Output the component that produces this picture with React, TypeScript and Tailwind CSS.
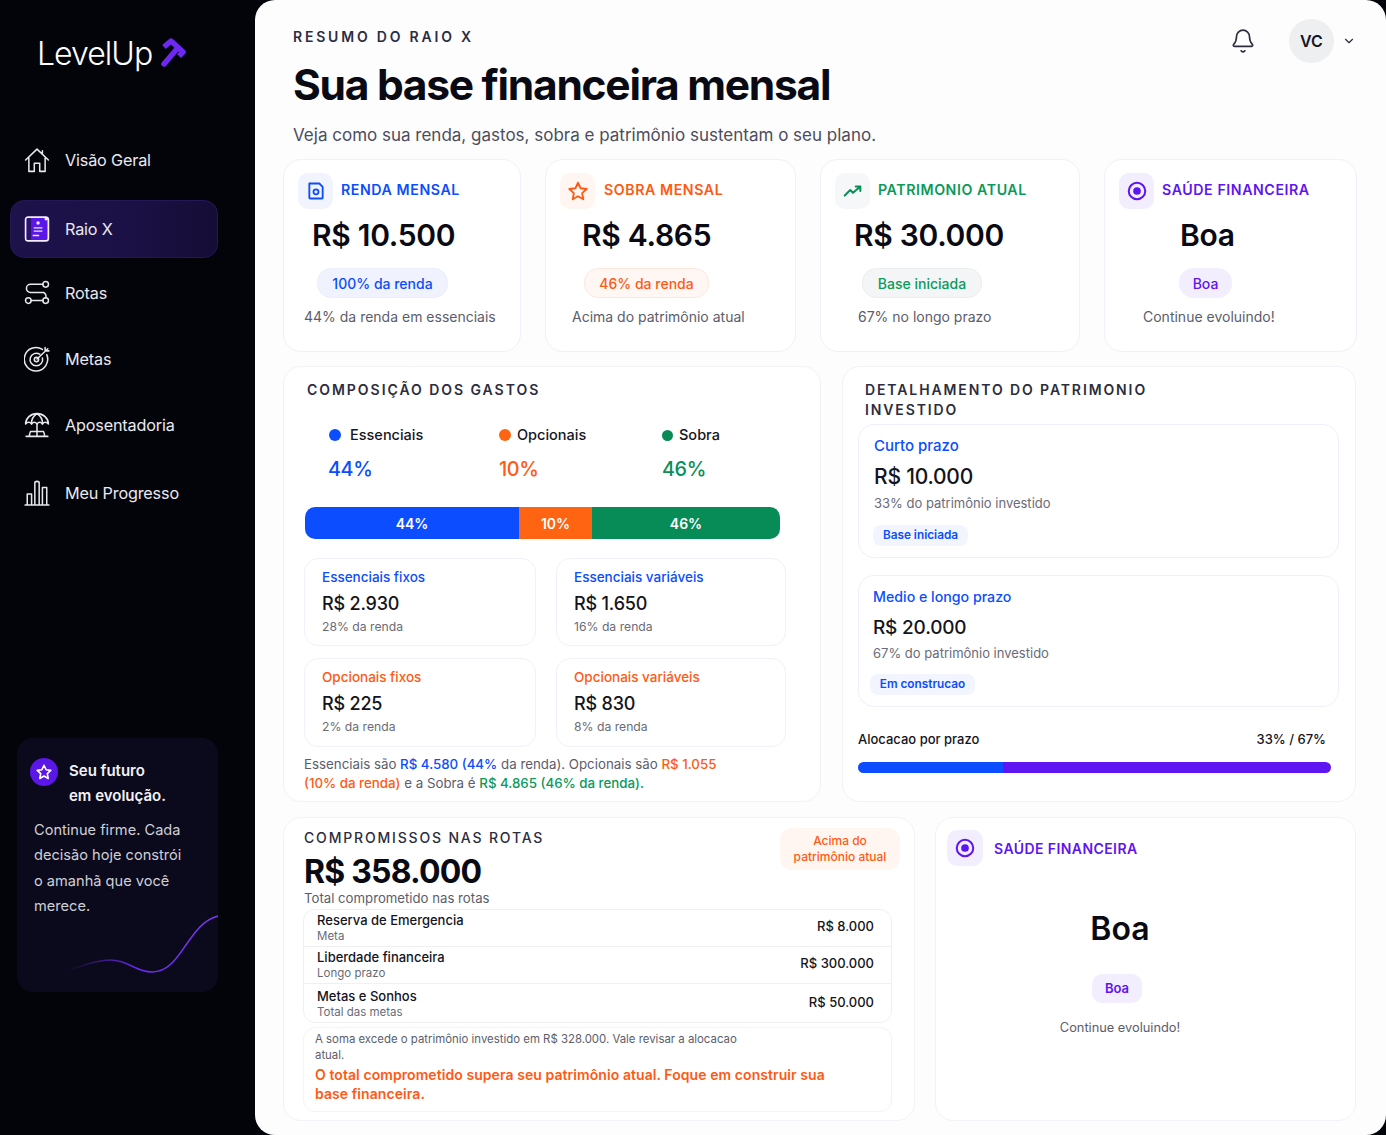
import { Bell, ChevronDown } from "lucide-react";
import type { ReactNode } from "react";

function Logo() {
  return (
    <div className="ml-[37px] flex h-[40px] items-center">
      <span className="text-[32px] font-light tracking-[-0.03em] text-white">LevelUp</span>
      <svg viewBox="0 0 27 30" className="mt-[-2px] ml-[8px] h-[30px] w-[27px]">
        <path d="M4 26 L16 12" stroke="#6d28f2" strokeWidth="5.5" strokeLinecap="round" fill="none" />
        <path d="M4 9 L11 3 L23 14 L19 18" stroke="#6d28f2" strokeWidth="5.5" strokeLinejoin="round" fill="none" />
      </svg>
    </div>
  );
}

function NavIcon({ name }: { name: string }) {
  const common = { fill: "none", stroke: "#e8e8ee", strokeWidth: 1.4, strokeLinecap: "round" as const, strokeLinejoin: "round" as const };
  if (name === "home")
    return (
      <svg viewBox="0 0 24 24" className="h-[26px] w-[26px]" {...common}>
        <path d="M1.5 12 L12 2 L22.5 12 M4.5 10 V22.5 H9.5 V15 H14.5 V22.5 H19.5 V10 M17 3.5 L17 6" />
      </svg>
    );
  if (name === "raio")
    return (
      <svg viewBox="0 0 24 24" className="h-[26px] w-[26px]">
        <rect x="1.5" y="1" width="21" height="22" rx="2.5" fill="#5b16e8" stroke="#f2f0ff" strokeWidth="1.6" />
        <rect x="2.5" y="2" width="4" height="20" fill="#2a1466" />
        <circle cx="13" cy="6.5" r="1.6" fill="#e9e3ff" />
        <path d="M9 11 H17 M9 14 H17 M8 18 H14" stroke="#e9e3ff" strokeWidth="1.2" />
        <circle cx="20.5" cy="2.5" r="1.6" fill="#f2f0ff" />
      </svg>
    );
  if (name === "rotas")
    return (
      <svg viewBox="0 0 24 24" className="h-[26px] w-[26px]" {...common}>
        <circle cx="20" cy="4" r="2.6" />
        <circle cx="4" cy="19" r="2.6" />
        <circle cx="20" cy="19" r="2.6" />
        <path d="M17.4 4 H6 a3.6 3.6 0 0 0 0 7.5 H18 a3.7 3.7 0 0 1 2 5 M6.6 19 H17.4" />
      </svg>
    );
  if (name === "metas")
    return (
      <svg viewBox="0 0 24 24" className="h-[26px] w-[26px]" {...common}>
        <path d="M17 3.2 A10.8 10.8 0 1 0 21 8" />
        <path d="M14.5 7.6 A5.8 5.8 0 1 0 17 11" />
        <circle cx="11.5" cy="12.5" r="2" />
        <path d="M12 12 L22 2.5 M19.5 1.5 V4.5 H23" />
      </svg>
    );
  if (name === "apos")
    return (
      <svg viewBox="0 0 24 24" className="h-[26px] w-[26px]" {...common}>
        <path d="M1.5 11 A10.5 9.5 0 0 1 22.5 11 Q19.5 8 17 11 Q14.5 8 12 11 Q9.5 8 7 11 Q4.5 8 1.5 11 Z" />
        <path d="M12 1.5 Q6.5 5 7 11 M12 1.5 Q17.5 5 17 11 M12 11 V22.5 M2 22.5 H22 M6 18 H18 M6 18 Q5 20 5 22.5 M18 18 Q19 20 19 22.5" />
      </svg>
    );
  return (
    <svg viewBox="0 0 24 24" className="h-[26px] w-[26px]" {...common}>
      <path d="M1 23 H23 M3 23 V13 H7 V23 M10 23 V2 Q12 0.5 14 2 V23 M17 23 V7 H21 V23" />
    </svg>
  );
}

const navItems = [
  { icon: "home", label: "Visão Geral", cls: "mt-[57px]" },
  { icon: "raio", label: "Raio X", cls: "mt-[11px]", active: true },
  { icon: "rotas", label: "Rotas", cls: "mt-[6px]" },
  { icon: "metas", label: "Metas", cls: "mt-[8px]" },
  { icon: "apos", label: "Aposentadoria", cls: "mt-[8px]" },
  { icon: "prog", label: "Meu Progresso", cls: "mt-[10px]" },
];

function Sidebar() {
  return (
    <aside className="flex w-[255px] shrink-0 flex-col pt-[34px]">
      <Logo />
      <nav className="flex flex-col">
        {navItems.map((item) => (
          <div
            key={item.label}
            className={`ml-[10px] flex h-[58px] w-[208px] items-center gap-[15px] rounded-[14px] text-[16.2px] tracking-[-0.01em] text-[#e9e9ef] ${item.cls} ${
              item.active ? "border border-[#241758] bg-gradient-to-r from-[#1d1249] via-[#1c1147] to-[#150d36] pl-[13px]" : "pl-[14px]"
            }`}
          >
            <NavIcon name={item.icon} />
            {item.label}
          </div>
        ))}
      </nav>
      <div className="relative mt-[216px] ml-[17px] h-[254px] w-[201px] overflow-hidden rounded-[16px] bg-[#0b0a1c] pt-[20px] pl-[13px]">
        <div className="flex gap-[11px]">
          <div className="flex h-[28px] w-[28px] items-center justify-center rounded-full bg-[#5b16e8]">
            <svg viewBox="0 0 24 24" className="h-[18px] w-[18px]" fill="none" stroke="#fff" strokeWidth="2.2" strokeLinejoin="round">
              <path d="M12 3 L14.8 9 L21 9.8 L16.4 14.2 L17.6 20.6 L12 17.4 L6.4 20.6 L7.6 14.2 L3 9.8 L9.2 9 Z" />
            </svg>
          </div>
          <div className="text-[15px] font-semibold leading-[25px] text-[#f2f2f6]">
            Seu futuro
            <br />
            em evolução.
          </div>
        </div>
        <p className="mt-[10px] ml-[4px] w-[160px] text-[14.6px] leading-[25.3px] text-[#cfcfd6]">
          Continue firme. Cada decisão hoje constrói o amanhã que você merece.
        </p>
        <svg viewBox="0 0 201 90" className="absolute right-0 bottom-0 h-[90px] w-[201px]" fill="none">
          <defs>
            <linearGradient id="wave" x1="0" x2="1" y1="0" y2="0">
              <stop offset="0.15" stopColor="#6d28f2" stopOpacity="0" />
              <stop offset="0.55" stopColor="#6d28f2" />
              <stop offset="1" stopColor="#7c3af5" />
            </linearGradient>
          </defs>
          <path d="M25 73 C50 73 70 58 93 58 C112 58 118 70 135 70 C165 70 170 22 201 14" stroke="url(#wave)" strokeWidth="1.5" />
        </svg>
      </div>
    </aside>
  );
}

type Stat = {
  label: string;
  labelCls: string;
  iconBg: string;
  icon: ReactNode;
  value: string;
  valueCls: string;
  pill: string;
  pillCls: string;
  note: string;
  noteCls: string;
  gap: string;
};

const stats: Stat[] = [
  {
    label: "RENDA MENSAL",
    labelCls: "text-[#0b4dff]",
    iconBg: "bg-[#f1f3fd]",
    icon: (
      <svg viewBox="0 0 24 24" className="h-[20px] w-[20px]" fill="none" stroke="#0b4dff" strokeWidth="2.2" strokeLinejoin="round">
        <path d="M4 3 H16 L20 7 V20 a1 1 0 0 1 -1 1 H5 a1 1 0 0 1 -1 -1 Z" />
        <circle cx="12" cy="13" r="3" />
      </svg>
    ),
    value: "R$ 10.500",
    valueCls: "ml-[14px]",
    pill: "100% da renda",
    pillCls: "ml-[19px] w-[131px] bg-[#f0f2fd] text-[#0b4dff] border-[#eceffb]",
    note: "44% da renda em essenciais",
    noteCls: "ml-[6px]",
    gap: "gap-[8px]",
  },
  {
    label: "SOBRA MENSAL",
    labelCls: "text-[#ff5a14]",
    iconBg: "bg-[#fff6f2]",
    icon: (
      <svg viewBox="0 0 24 24" className="h-[22px] w-[22px]" fill="none" stroke="#ff5a14" strokeWidth="2" strokeLinejoin="round">
        <path d="M12 3 L14.8 9 L21.5 9.8 L16.5 14.3 L17.8 21 L12 17.7 L6.2 21 L7.5 14.3 L2.5 9.8 L9.2 9 Z" />
      </svg>
    ),
    value: "R$ 4.865",
    valueCls: "ml-[22px]",
    pill: "46% da renda",
    pillCls: "ml-[24px] w-[125px] bg-[#fff7f3] text-[#ff5a14] border-[#fde8de]",
    note: "Acima do patrimônio atual",
    noteCls: "ml-[12px]",
    gap: "gap-[9px]",
  },
  {
    label: "PATRIMONIO ATUAL",
    labelCls: "text-[#0a9a5c]",
    iconBg: "bg-[#f6f7f8]",
    icon: (
      <svg viewBox="0 0 24 24" className="h-[22px] w-[22px]" fill="none" stroke="#0a8f57" strokeWidth="2.2" strokeLinecap="round" strokeLinejoin="round">
        <path d="M3 17 L9 11 L12 14 L20 7 M15 7 H20 V12" />
      </svg>
    ),
    value: "R$ 30.000",
    valueCls: "ml-[19px]",
    pill: "Base iniciada",
    pillCls: "ml-[27px] w-[120px] bg-[#f3f5f6] text-[#0a9a5c] border-[#eceeef]",
    note: "67% no longo prazo",
    noteCls: "ml-[23px]",
    gap: "gap-[8px]",
  },
  {
    label: "SAÚDE FINANCEIRA",
    labelCls: "text-[#5f14f2]",
    iconBg: "bg-[#f2eefe]",
    icon: (
      <svg viewBox="0 0 24 24" className="h-[22px] w-[22px]" fill="none">
        <circle cx="12" cy="12" r="9" stroke="#5f14f2" strokeWidth="2.2" />
        <circle cx="12" cy="12" r="4.2" fill="#5f14f2" />
      </svg>
    ),
    value: "Boa",
    valueCls: "ml-[61px]",
    pill: "Boa",
    pillCls: "ml-[60px] w-[53px] bg-[#f2eefe] text-[#5f14f2] border-[#f2eefe]",
    note: "Continue evoluindo!",
    noteCls: "ml-[24px]",
    gap: "gap-[8px]",
  },
];

function StatCard({ s }: { s: Stat }) {
  return (
    <div className="h-[193px] rounded-[18px] border border-[#f0f1fb] bg-white pt-[13px] pl-[14px]">
      <div className={`flex items-center ${s.gap}`}>
        <div className={`flex h-[36px] w-[35px] items-center justify-center rounded-[10px] ${s.iconBg}`}>{s.icon}</div>
        <span className={`pb-[2px] text-[14.2px] font-semibold tracking-[0.04em] ${s.labelCls}`}>{s.label}</span>
      </div>
      <div className={`mt-[7px] text-[30px] leading-[38px] font-semibold tracking-[-0.01em] whitespace-pre text-[#0a0a14] ${s.valueCls}`}>{s.value}</div>
      <div className={`mt-[14px] flex h-[30px] items-center justify-center rounded-[14px] border text-[14px] font-medium ${s.pillCls}`}>{s.pill}</div>
      <div className={`mt-[9px] text-[14px] leading-[20px] text-[#5c5d6c] ${s.noteCls}`}>{s.note}</div>
    </div>
  );
}

const subCards = [
  { title: "Essenciais fixos", value: "R$ 2.930", sub: "28% da renda", color: "text-[#0b4dff]", cls: "h-[88px]" },
  { title: "Essenciais variáveis", value: "R$ 1.650", sub: "16% da renda", color: "text-[#0b4dff]", cls: "h-[88px]" },
  { title: "Opcionais fixos", value: "R$ 225", sub: "2% da renda", color: "text-[#ff5a14]", cls: "h-[89px]" },
  { title: "Opcionais variáveis", value: "R$ 830", sub: "8% da renda", color: "text-[#ff5a14]", cls: "h-[89px]" },
];

function Composicao() {
  return (
    <section className="h-[436px] rounded-[18px] border border-[#f2f3f9] bg-white pt-[13px] pl-[20px]">
      <h2 className="ml-[3px] text-[14px] leading-[20px] font-semibold tracking-[0.14em] text-[#2c2d3e]">COMPOSIÇÃO DOS GASTOS</h2>
      <div className="mt-[25px] grid grid-cols-[195px_163px_120px] text-[14.5px] leading-[20px] font-medium text-[#16161f]">
        <div className="ml-[25px] flex items-center gap-[9px]">
          <span className="h-[12px] w-[12px] rounded-full bg-[#0b4dff]" />
          Essenciais
        </div>
        <div className="flex items-center gap-[6px]">
          <span className="h-[12px] w-[12px] rounded-full bg-[#ff6412]" />
          Opcionais
        </div>
        <div className="flex items-center gap-[6px]">
          <span className="h-[11px] w-[11px] rounded-full bg-[#078c57]" />
          Sobra
        </div>
      </div>
      <div className="mt-[10px] grid grid-cols-[195px_163px_120px] text-[19.8px] leading-[28px] font-medium tracking-[-0.02em]">
        <div className="ml-[24px] text-[#0b4dff]">44%</div>
        <div className="text-[#ff5a14]">10%</div>
        <div className="text-[#0a8f57]">46%</div>
      </div>
      <div className="mt-[24px] ml-px flex h-[32px] w-[475px] overflow-hidden rounded-[10px] text-[14px] font-semibold text-white">
        <div className="flex w-[214px] items-center justify-center bg-[#0b4dff]">44%</div>
        <div className="flex w-[73px] items-center justify-center bg-[#ff6412]">10%</div>
        <div className="flex flex-1 items-center justify-center bg-[#078c57]">46%</div>
      </div>
      <div className="mt-[19px] grid w-[482px] grid-cols-[232px_230px] gap-x-[20px] gap-y-[12px]">
        {subCards.map((c) => (
          <div key={c.title} className={`rounded-[14px] border border-[#f0f1fb] bg-white pt-[9px] pl-[17px] ${c.cls}`}>
            <div className={`text-[13.5px] leading-[19px] font-medium ${c.color}`}>{c.title}</div>
            <div className="mt-[4px] text-[18px] leading-[26px] font-medium tracking-[-0.01em] text-[#14141c]">{c.value}</div>
            <div className="mt-[1px] text-[12.2px] leading-[18px] text-[#6a6b78]">{c.sub}</div>
          </div>
        ))}
      </div>
      <p className="mt-[8px] w-[440px] text-[13.3px] leading-[19px] text-[#5c5d6c]">
        Essenciais são <span className="font-medium text-[#0b4dff]">R$ 4.580 (44%</span> da renda). Opcionais são{" "}
        <span className="font-medium text-[#ff5a14]">R$ 1.055</span>
        <br />
        <span className="font-medium text-[#ff5a14]">(10% da renda)</span> e a Sobra é{" "}
        <span className="font-medium text-[#0a9a5c]">R$ 4.865 (46% da renda).</span>
      </p>
    </section>
  );
}

function Detalhamento() {
  return (
    <section className="h-[436px] rounded-[18px] border border-[#f2f3f9] bg-white pt-[13px] pl-[15px]">
      <h2 className="ml-[7px] w-[320px] text-[14px] leading-[20px] font-semibold tracking-[0.135em] text-[#2c2d3e]">DETALHAMENTO DO PATRIMONIO INVESTIDO</h2>
      <div className="mt-[4px] h-[134px] w-[481px] rounded-[16px] border border-[#eef0fb] bg-white pt-[11px] pl-[15px]">
        <div className="text-[15px] leading-[20px] font-medium text-[#0b4dff]">Curto prazo</div>
        <div className="mt-[7px] text-[21px] leading-[28px] font-medium tracking-[-0.01em] text-[#14141c]">R$ 10.000</div>
        <div className="mt-[2px] text-[13px] leading-[20px] text-[#6a6b78]">33% do patrimônio investido</div>
        <div className="mt-[12px] flex h-[21px] w-[95px] -translate-x-px items-center justify-center rounded-[8px] bg-[#f2f4fe] text-[11.8px] font-semibold text-[#0b4dff]">Base iniciada</div>
      </div>
      <div className="mt-[17px] h-[132px] w-[481px] rounded-[16px] border border-[#eef0fb] bg-white pt-[11px] pl-[14px]">
        <div className="text-[14.2px] leading-[20px] font-medium text-[#0b4dff]">Medio e longo prazo</div>
        <div className="mt-[7px] text-[19px] leading-[28px] font-medium tracking-[-0.01em] text-[#14141c]">R$ 20.000</div>
        <div className="mt-[1px] text-[13px] leading-[20px] text-[#6a6b78]">67% do patrimônio investido</div>
        <div className="mt-[11px] flex h-[21px] w-[105px] -translate-x-[3px] items-center justify-center rounded-[8px] bg-[#f2f4fe] text-[11.8px] font-semibold text-[#0b4dff]">Em construcao</div>
      </div>
      <div className="mt-[22px] flex w-[468px] justify-between text-[13px] leading-[20px] font-medium text-[#14141c]">
        <span>Alocacao por prazo</span>
        <span>33% / 67%</span>
      </div>
      <div className="mt-[13px] flex h-[11px] w-[473px] overflow-hidden rounded-full">
        <div className="w-[145px] bg-[#0b4dff]" />
        <div className="flex-1 bg-[#5f14f2]" />
      </div>
    </section>
  );
}

const compromissos = [
  { name: "Reserva de Emergencia", sub: "Meta", value: "R$ 8.000", cls: "h-[36px] pb-[2px]" },
  { name: "Liberdade financeira", sub: "Longo prazo", value: "R$ 300.000", cls: "h-[37px] border-t border-[#eff0f6] pb-[2px]" },
  { name: "Metas e Sonhos", sub: "Total das metas", value: "R$ 50.000", cls: "h-[39px] border-t border-[#eff0f6]" },
];

function Compromissos() {
  return (
    <section className="relative h-[304px] rounded-[18px] border border-[#f2f3f9] bg-white pt-[10px] pl-[20px]">
      <div className="absolute top-[10px] right-[14px] flex h-[42px] w-[120px] items-center justify-center rounded-[12px] bg-[#fff6f2] text-center text-[12px] leading-[16px] font-medium text-[#ff5a14]">
        Acima do
        <br />
        patrimônio atual
      </div>
      <h2 className="text-[14px] leading-[20px] font-medium tracking-[0.13em] text-[#2c2d3e]">COMPROMISSOS NAS ROTAS</h2>
      <div className="mt-[4px] text-[32px] leading-[40px] font-bold tracking-[-0.025em] text-[#0a0a14]">R$ 358.000</div>
      <div className="-mt-[4px] text-[13.2px] leading-[20px] text-[#5c5d6c]">Total comprometido nas rotas</div>
      <div className="mt-[1px] -ml-px w-[589px] rounded-[12px] border border-[#eff0f6]">
        {compromissos.map((c) => (
          <div key={c.name} className={`flex items-center justify-between pr-[17px] pl-[13px] ${c.cls}`}>
            <div>
              <div className="text-[13px] leading-[17px] font-medium text-[#14141c]">{c.name}</div>
              <div className="text-[11.5px] leading-[14px] text-[#6a6b78]">{c.sub}</div>
            </div>
            <div className="text-[13px] font-medium text-[#14141c]">{c.value}</div>
          </div>
        ))}
      </div>
      <div className="mt-[4px] -ml-px h-[85px] w-[589px] rounded-[12px] border border-[#fdf1ec] pt-[4px] pl-[11px]">
        <p className="w-[440px] text-[11.4px] leading-[15.5px] text-[#5c5d6c]">A soma excede o patrimônio investido em R$ 328.000. Vale revisar a alocacao atual.</p>
        <p className="mt-[2px] w-[530px] text-[14px] leading-[19px] font-semibold tracking-[0.005em] text-[#ff5a14]">O total comprometido supera seu patrimônio atual. Foque em construir sua base financeira.</p>
      </div>
    </section>
  );
}

function SaudeCard() {
  return (
    <section className="h-[304px] rounded-[18px] border border-[#f2f3f9] bg-white pt-[12px] pr-[62px] pl-[11px]">
      <div className="flex items-center gap-[11px]">
        <div className="flex h-[36px] w-[36px] shrink-0 items-center justify-center rounded-[10px] bg-[#f2eefe]">
          <svg viewBox="0 0 24 24" className="h-[22px] w-[22px]" fill="none">
            <circle cx="12" cy="12" r="9" stroke="#5f14f2" strokeWidth="2.2" />
            <circle cx="12" cy="12" r="4.2" fill="#5f14f2" />
          </svg>
        </div>
        <span className="text-[14px] font-semibold tracking-[0.03em] text-[#5f14f2]">SAÚDE FINANCEIRA</span>
      </div>
      <div className="flex flex-col items-center">
        <div className="mt-[41px] text-[32px] leading-[44px] font-semibold text-[#0a0a14]">Boa</div>
        <div className="mt-[23px] mr-[6px] flex h-[29px] w-[50px] items-center justify-center rounded-[10px] bg-[#f2eefe] text-[13px] font-semibold text-[#5f14f2]">Boa</div>
        <div className="mt-[16px] text-[12.8px] leading-[18px] text-[#5c5d6c]">Continue evoluindo!</div>
      </div>
    </section>
  );
}

export default function App() {
  return (
    <div className="flex h-[1135px] w-[1386px] overflow-hidden bg-[#03040a] font-['Inter',sans-serif]">
      <Sidebar />
      <main className="h-[1135px] w-[1131px] rounded-[20px] bg-[#fdfdfe] pr-[30px] pl-[28px]">
        <header className="relative h-[159px] pt-[28px] pl-[10px]">
          <div className="text-[14px] leading-[18px] font-semibold tracking-[0.2em] text-[#2c2d3e]">RESUMO DO RAIO X</div>
          <h1 className="mt-[13px] text-[42.5px] leading-[52px] font-bold tracking-[-0.03em] text-[#0a0a14]">Sua base financeira mensal</h1>
          <p className="mt-[12px] text-[17px] leading-[24px] text-[#4c4d5c]">Veja como sua renda, gastos, sobra e patrimônio sustentam o seu plano.</p>
          <div className="absolute top-[19px] right-0 flex items-center">
            <Bell className="h-[26px] w-[26px] text-[#2c2d3e]" strokeWidth={1.5} />
            <div className="ml-[33px] flex h-[44px] w-[45px] items-center justify-center rounded-full bg-[#eeeff1] text-[16px] font-semibold text-[#16161f]">VC</div>
            <ChevronDown className="ml-[8px] h-[14px] w-[14px] text-[#2c2d3e]" strokeWidth={2} />
          </div>
        </header>
        <div className="grid grid-cols-[238px_251px_260px_253px] gap-x-[24px]">
          {stats.map((s) => (
            <StatCard key={s.label} s={s} />
          ))}
        </div>
        <div className="mt-[14px] grid grid-cols-[538px_514px] gap-x-[21px]">
          <Composicao />
          <Detalhamento />
        </div>
        <div className="mt-[15px] grid grid-cols-[632px_421px] gap-x-[20px]">
          <Compromissos />
          <SaudeCard />
        </div>
      </main>
    </div>
  );
}
